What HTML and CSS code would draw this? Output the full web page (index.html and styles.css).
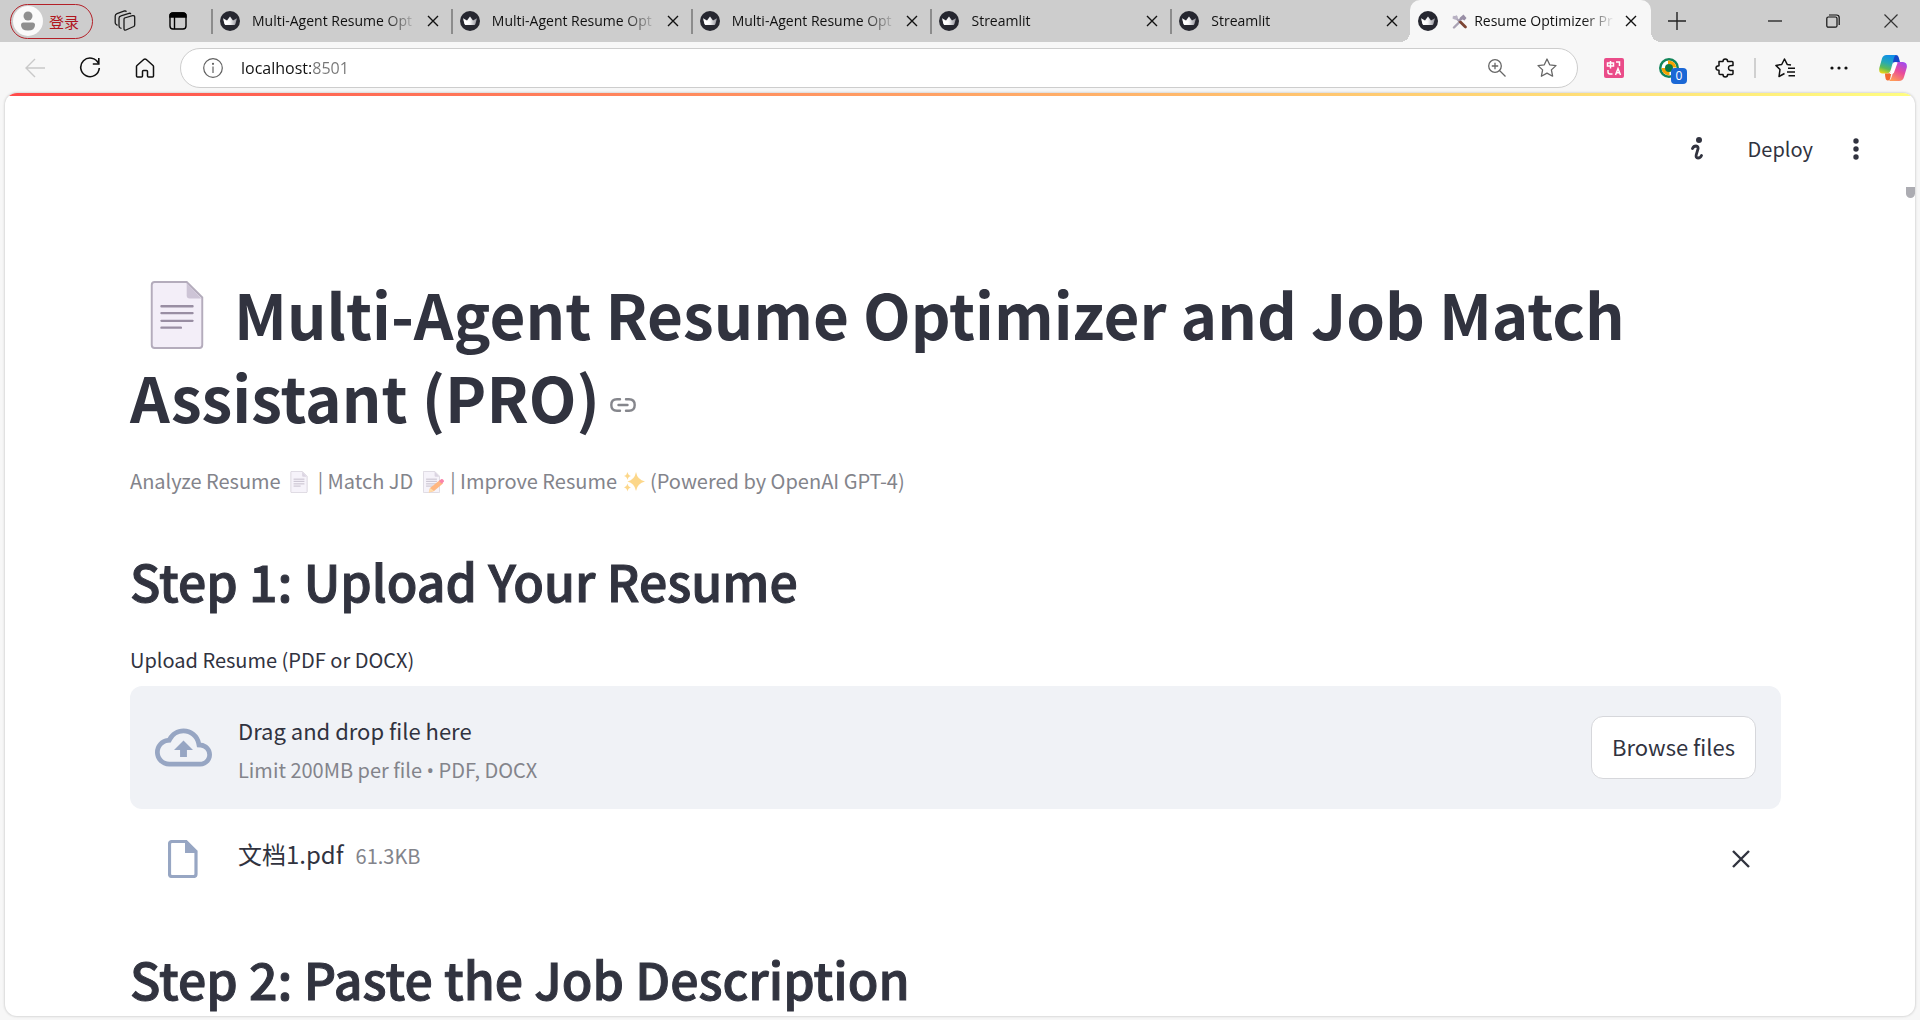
FILE: index.html
```html
<!DOCTYPE html>
<html lang="en">
<head>
<meta charset="utf-8">
<title>Resume Optimizer Pro</title>
<link rel="stylesheet" href="styles.css">
</head>
<body>
<svg class="defs" aria-hidden="true">
  <defs>
    <linearGradient id="crownShade" x1="0" x2="1"><stop offset="0" stop-color="#fff"/><stop offset=".5" stop-color="#f4f4f6"/><stop offset="1" stop-color="#8e8e96"/></linearGradient>
    <symbol id="crown" viewBox="0 0 20 20"><circle cx="10" cy="10" r="10" fill="#262730"/><path d="M3 7.200l4 2.300 3-4 3 4 4-2.300-1.600 5.800q-.3 1-1.200 1H5.800q-.9 0-1.200-1z" fill="url(#crownShade)"/><path d="M3.600 9.500L10 11l-4 3q-1 0-1.300-1z" fill="#fff"/></symbol>
    <symbol id="cross" viewBox="0 0 12 12"><path d="M1 1l10 10M11 1L1 11" fill="none" stroke="currentColor" stroke-width="1.400"/></symbol>
    <symbol id="page" viewBox="0 0 54 70"><path d="M4 1h33l16 16v49q0 3-3 3H4q-3 0-3-3V4q0-3 3-3z" fill="#f3eef8" stroke="#b4acbc" stroke-width="2"/><path d="M37 2l15 16H40q-3 0-3-3z" fill="#cdc4d6"/><path d="M11 26h32M11 33h32M11 41h32M11 48h20" stroke="#998ea3" stroke-width="2.400" stroke-linecap="round"/></symbol>
  </defs>
</svg>

<header class="browser">
  <div class="strip">
    <div class="strip-start">
      <button class="profile" type="button">
        <svg class="avatar" viewBox="0 0 30 30"><circle cx="15" cy="15" r="15" fill="#fafafa"/><circle cx="15" cy="10" r="4.500" fill="#8f8f8f"/><path d="M8 19q0-2.500 2.500-2.500h9q2.500 0 2.500 2.500 0 5.500-7 5.500T8 19z" fill="#8f8f8f"/></svg>
        <span>登录</span>
      </button>
      <button class="strip-btn" type="button" aria-label="Workspaces"><svg width="22" height="22" viewBox="0 0 22 22" fill="none" stroke="#1a1a1a" stroke-width="1.300"><path d="M10.500 8l8-2.300q2.200-.4 2.200 1.600v7.400q0 1.300-1 1.800l-7.700 3.500q-2 .6-2-1.400v-8.800q0-1.400.5-1.800z"/><path d="M7.500 18.500l-1.500-.8q-1-.6-1-1.900V8.300q0-2 2-2.500l8-2.500q1.500-.3 1.800.8M3.500 15.500L2 14.300q-.8-.7-.8-1.800V6q0-1.700 1.800-2.400L10.500 1q1.500-.3 1.800.8"/></svg></button>
      <button class="strip-btn" type="button" aria-label="Tab actions"><svg width="18" height="18" viewBox="0 0 18 18" fill="none" stroke="#000" stroke-width="1.400"><rect x="1" y="1" width="16" height="16" rx="3"/><path d="M1 5V4q0-3 3-3h10q3 0 3 3v1z" fill="#000"/><path d="M5.500 5v12"/></svg></button>
    </div>
    <nav class="tabs">
      <div class="tab"><svg class="favicon"><use href="#crown"/></svg><span class="tab-title">Multi-Agent Resume Opt</span><button class="tab-close" type="button" aria-label="Close tab"><svg><use href="#cross"/></svg></button></div>
      <div class="tab"><svg class="favicon"><use href="#crown"/></svg><span class="tab-title">Multi-Agent Resume Opt</span><button class="tab-close" type="button" aria-label="Close tab"><svg><use href="#cross"/></svg></button></div>
      <div class="tab"><svg class="favicon"><use href="#crown"/></svg><span class="tab-title">Multi-Agent Resume Opt</span><button class="tab-close" type="button" aria-label="Close tab"><svg><use href="#cross"/></svg></button></div>
      <div class="tab"><svg class="favicon"><use href="#crown"/></svg><span class="tab-title">Streamlit</span><button class="tab-close" type="button" aria-label="Close tab"><svg><use href="#cross"/></svg></button></div>
      <div class="tab"><svg class="favicon"><use href="#crown"/></svg><span class="tab-title">Streamlit</span><button class="tab-close" type="button" aria-label="Close tab"><svg><use href="#cross"/></svg></button></div>
      <div class="tab active"><svg class="favicon"><use href="#crown"/></svg><span class="tab-title"><svg class="tools" viewBox="0 0 15 15"><path d="M3 3l9.500 9.500" stroke="#aaa3b5" stroke-width="2.200" stroke-linecap="round"/><path d="M1 1.500l2 2 1-2.500q2.500 1 1.500 4Q3 6.500.5 4.500z" fill="#b9b2c4"/><path d="M6.500 9L2 13.500" stroke="#aaa3b5" stroke-width="2.400" stroke-linecap="round"/><path d="M8 7.500l5.500 5.500" stroke="#7d4533" stroke-width="2.600" stroke-linecap="round"/><path d="M8 3.500l3.500-3 3 3.500-2 2.500-2-1-3 2-1-1z" fill="#998fa6"/></svg>Resume Optimizer Pr</span><button class="tab-close" type="button" aria-label="Close tab"><svg><use href="#cross"/></svg></button></div>
    </nav>
    <button class="new-tab" type="button" aria-label="New tab"><svg width="18" height="18" viewBox="0 0 18 18"><path d="M9 0v18M0 9h18" stroke="#222" stroke-width="1.400"/></svg></button>
    <div class="window-controls">
      <button type="button" aria-label="Minimize"><svg width="14" height="14" viewBox="0 0 14 14"><path d="M0 7h14" stroke="#111" stroke-width="1.200"/></svg></button>
      <button type="button" aria-label="Restore"><svg width="14" height="14" viewBox="0 0 14 14" fill="none" stroke="#111" stroke-width="1.200"><rect x=".8" y="3" width="10.200" height="10.200" rx="1.500"/><path d="M3 1h7.500q2.700 0 2.700 2.700V11"/></svg></button>
      <button type="button" aria-label="Close"><svg width="14" height="14" viewBox="0 0 14 14"><path d="M.5.5l13 13M13.500.5l-13 13" stroke="#333" stroke-width="1.200"/></svg></button>
    </div>
  </div>

  <div class="toolbar">
    <div class="nav-buttons">
      <button type="button" aria-label="Back" disabled><svg width="20" height="20" viewBox="0 0 20 20" fill="none" stroke="#c9c9c9" stroke-width="1.400"><path d="M20 10H1M10 1L1 10l9 9"/></svg></button>
      <button type="button" aria-label="Refresh"><svg width="22" height="22" viewBox="0 0 22 22" fill="none" stroke="#111" stroke-width="1.600"><path d="M19.500 6.500A9.300 9.300 0 1 0 20.300 11"/><path d="M19.800 1v6h-6"/></svg></button>
      <button type="button" aria-label="Home"><svg width="20" height="20" viewBox="0 0 20 20" fill="none" stroke="#111" stroke-width="1.500" stroke-linejoin="round"><path d="M1.500 8.500Q1.500 8 2 7.500l7-6.200q1-.8 2 0l7 6.200q.5.500.5 1V18q0 1-1 1h-4q-1 0-1-1v-4.500q0-1-1-1h-3q-1 0-1 1V18q0 1-1 1h-4q-1 0-1-1z"/></svg></button>
    </div>
    <div class="address">
      <svg width="20" height="20" viewBox="0 0 20 20" fill="none" stroke="#616161" stroke-width="1.200"><circle cx="10" cy="10" r="9.300"/><path d="M10 8.500V15" /><circle cx="10" cy="5.800" r=".5" fill="#616161"/></svg>
      <input class="url" type="text" aria-label="Address" value="localhost:8501">
      <button type="button" aria-label="Zoom"><svg width="18" height="18" viewBox="0 0 18 18" fill="none" stroke="#666" stroke-width="1.300"><circle cx="7" cy="7" r="6.300"/><path d="M11.500 11.500l6 6M7 3.800v6.400M3.800 7h6.400"/></svg></button>
      <button type="button" aria-label="Favorite"><svg width="20" height="20" viewBox="0 0 20 20" fill="none" stroke="#666" stroke-width="1.300" stroke-linejoin="round"><path d="M10 1l2.700 5.800 6.300.8-4.600 4.300 1.200 6.300-5.600-3.100-5.600 3.100 1.200-6.300L1 7.600l6.300-.8z"/></svg></button>
    </div>
    <div class="extensions">
      <button type="button" class="ext" aria-label="Translate"><svg width="20" height="20" viewBox="0 0 20 20" fill="none" stroke="#fff" stroke-width="1.500"><rect width="20" height="20" rx="2" fill="#ea4c89" stroke="none"/><path d="M3.500 5h6v3h-6zM6.500 3v7.500M12 4h3.500v4M4 12v2q0 2 2 2h2.500M11.500 17l2.500-6.500 2.500 6.500M12.500 14.800h3"/></svg></button>
      <button type="button" class="ext download" aria-label="Downloader"><svg width="28" height="28" viewBox="0 0 28 28"><circle cx="10" cy="10" r="10" fill="#12855a"/><circle cx="10" cy="10" r="7.500" fill="#fff"/><path d="M9 2.500q7 0 8.500 7h-4Q13 6 9 6zM2.500 10q.5 7 8 7.500v-4Q6.500 13 6.500 10z" fill="#f5a200"/><circle cx="10" cy="10" r="4" fill="#0c7a45"/></svg><span class="badge">0</span></button>
      <button type="button" class="ext puzzle" aria-label="Extensions"><svg width="20" height="20" viewBox="0 0 20 20" fill="none" stroke="#111" stroke-width="1.500" stroke-linejoin="round"><path d="M4 3.500h4q0-2.500 2.300-2.500t2.300 2.500H17q1 0 1 1v3q-4.500-.5-4.500 2.500T18 12.500v3q0 1-1 1h-4.400q0 2.500-2.300 2.500T8 16.500H5q-1 0-1-1v-3.200Q1 12.300 1 10t3-2.300z"/></svg></button>
      <span class="divider"></span>
      <button type="button" class="ext" aria-label="Favorites"><svg width="20" height="20" viewBox="0 0 20 20" fill="none" stroke="#111" stroke-width="1.500" stroke-linejoin="round"><path d="M16 7l-3.800-.6L9.500 1 6.700 6.500.9 7.400 5 11.500l-1 7L9.500 15.500M13 10.300h7M12 14h8M13.500 17.700H20"/></svg></button>
      <button type="button" class="ext" aria-label="Menu"><svg width="18" height="4" viewBox="0 0 18 4"><g fill="#111"><circle cx="2" cy="2" r="1.600"/><circle cx="9" cy="2" r="1.600"/><circle cx="16" cy="2" r="1.600"/></g></svg></button>
      <button type="button" class="ext copilot" aria-label="Copilot"><svg width="28" height="26" viewBox="0 0 28 26"><defs><linearGradient id="cpA" x1=".5" y1="0" x2=".2" y2="1"><stop offset="0" stop-color="#0f8fe8"/><stop offset=".4" stop-color="#26a9b5"/><stop offset=".7" stop-color="#5dbb58"/><stop offset="1" stop-color="#f4d713"/></linearGradient><linearGradient id="cpB" x1=".8" y1="0" x2=".3" y2="1"><stop offset="0" stop-color="#a04bf0"/><stop offset=".5" stop-color="#ea4c99"/><stop offset="1" stop-color="#ff9a57"/></linearGradient></defs><path d="M14 0h3q2 0 2.600 2L21 7h-5q-2 0-2.600 2z" fill="#1748c9"/><path d="M7.500 0H17q-1.500.8-2.200 3.500L12 14q-1.200 4.500-4.500 4.500H3.500Q-.5 18.500.3 13L3 3.500Q4 0 7.500 0z" fill="url(#cpA)"/><path d="M20 7h4q4.500.5 3.800 5.500L25 22q-1 4-5 4H10q2-1 3-5l2.500-9.500Q16.700 7 20 7z" fill="url(#cpB)"/><path d="M6 18.500h3q2.500-.2 4-3.500l-1.500 7Q11 26 8.500 25.500T6 18.500z" fill="#f2682f"/><path d="M15.500 8h3l-3.500 9.500q-.8 1.500-2.500 1.500h-2z" fill="#fff"/></svg></button>
    </div>
  </div>
</header>

<main class="app">
  <div class="decoration"></div>
  <div class="app-header">
    <button class="info" type="button" aria-label="Status"><svg width="12" height="24" viewBox="0 0 12 24"><circle cx="8" cy="3" r="3" fill="#31333f"/><path d="M1.500 11.500Q2.500 9 5 9q2.500.2 2 3L5.300 17.500Q4.500 21 7 21q2.500 0 3.500-2.500" fill="none" stroke="#31333f" stroke-width="2.800" stroke-linecap="round"/></svg></button>
    <button class="deploy" type="button">Deploy</button>
    <button class="menu" type="button" aria-label="Main menu"><svg width="6" height="22" viewBox="0 0 6 22" fill="#31333f"><circle cx="3" cy="3" r="2.700"/><circle cx="3" cy="11" r="2.700"/><circle cx="3" cy="19" r="2.700"/></svg></button>
  </div>
  <span class="scroll-thumb"></span>

  <div class="content">
    <h1><svg class="title-icon" role="img" aria-label="Page"><use href="#page"/></svg> Multi-Agent Resume Optimizer and Job Match Assistant (PRO)<a class="anchor" href="#" aria-label="Link to heading"><svg width="26" height="14" viewBox="0 0 26 14" fill="none" stroke="#85868c" stroke-width="2.400" stroke-linecap="round"><path d="M10 1.300H7Q1.300 1.300 1.300 7T7 12.700h3M16 1.300h3q5.700 0 5.700 5.700T19 12.700h-3M8.500 7h9"/></svg></a></h1>
    <p class="caption">Analyze Resume <svg class="emoji"><use href="#page"/></svg> | Match JD <svg class="emoji" viewBox="0 0 28 22"><use href="#page" x="5" width="17" height="22"/><path d="M12 17L22 9l3 3.500-9 7.500-5 1.500z" fill="#ff9a4d"/><path d="M12 17l-1.500 4.500L16 20z" fill="#ffd08a"/><path d="M21 10l2-1.800q1.500-.6 2.500.8t0 2l-1.700 1.700z" fill="#f84f86"/></svg> | Improve Resume <svg class="emoji sparkles" viewBox="3 0 24 22" fill="#fcc75a"><path d="M17 1q1.500 8 9 9.500-7.500 1.500-9 9.500-1.500-8-8.500-9.500Q15.500 9 17 1zM8.500 1q.6 3.300 3.500 4-2.900.7-3.500 4-.6-3.300-3.500-4 2.900-.7 3.500-4zM8.500 12.500q.6 3.300 3.500 4-2.900.7-3.500 4-.6-3.300-3.500-4 2.900-.7 3.500-4z"/></svg> (Powered by OpenAI GPT-4)</p>

    <h2>Step 1: Upload Your Resume</h2>
    <label class="field-label" for="browse">Upload Resume (PDF or DOCX)</label>
    <section class="dropzone">
      <svg class="cloud" viewBox="0 0 24 24" fill="#97a6c3"><path d="M19.350 10.040A7.490 7.490 0 0 0 12 4C9.110 4 6.600 5.640 5.350 8.040A5.994 5.994 0 0 0 0 14c0 3.310 2.690 6 6 6h13c2.760 0 5-2.240 5-5 0-2.640-2.050-4.780-4.650-4.960zM19 18H6c-2.210 0-4-1.790-4-4 0-2.050 1.530-3.760 3.560-3.970l1.070-.11.5-.95A5.469 5.469 0 0 1 12 6c2.620 0 4.880 1.860 5.390 4.430l.3 1.500 1.530.11A2.980 2.980 0 0 1 22 15c0 1.650-1.350 3-3 3zM8 13h2.550v3h2.900v-3H16l-4-4z"/></svg>
      <div class="drop-text">
        <span class="drop-title">Drag and drop file here</span>
        <span class="drop-limit">Limit 200MB per file <span class="bullet">•</span> PDF, DOCX</span>
      </div>
      <button class="browse" id="browse" type="button">Browse files</button>
    </section>
    <div class="file">
      <svg class="file-icon" viewBox="0 0 30 38"><path d="M3 1.500h15L28 11.500V34q0 2.500-2.500 2.500H4Q1.500 36.500 1.500 34V4Q1.500 1.500 4 1.500z" fill="none" stroke="#97a6c3" stroke-width="3.200"/><path d="M17 1.500V13h11.500z" fill="#97a6c3"/></svg>
      <div class="file-info">
        <span class="file-name">文档1.pdf</span>
        <span class="file-size">61.3KB</span>
      </div>
      <button class="file-remove" type="button" aria-label="Remove file"><svg width="18" height="18" viewBox="0 0 18 18"><path d="M1 1l16 16M17 1L1 17" stroke="#31333f" stroke-width="2.400"/></svg></button>
    </div>

    <h2 class="next-step">Step 2: Paste the Job Description</h2>
  </div>
</main>
</body>
</html>
```
FILE: styles.css
```css
* { box-sizing: border-box; }
html, body { height: 100%; }
body {
  margin: 0;
  display: flex;
  flex-direction: column;
  overflow: hidden;
  background: #f7f7f7;
  color: #31333f;
  font-family: "Noto Sans CJK SC", "Source Sans Pro", sans-serif;
}
button {
  margin: 0;
  padding: 0;
  border: 0;
  background: none;
  color: inherit;
  font: inherit;
}
svg { display: block; flex: none; }
.defs { position: absolute; width: 0; height: 0; }

/* Browser chrome */
.browser {
  flex: none;
  color: #111;
  font-family: "Open Sans", "Noto Sans CJK SC", sans-serif;
}
.strip {
  display: flex;
  align-items: center;
  height: 42px;
  background: #cdcdcd;
}
.strip-start {
  display: flex;
  align-items: center;
  flex: none;
  width: 211px;
  padding-left: 10px;
}
.profile {
  display: flex;
  align-items: center;
  gap: 6px;
  width: 83px;
  height: 35px;
  padding-left: 2px;
  border: 1px solid #b32028;
  border-radius: 18px;
  color: #b0151d;
  font-size: 15px;
}
.avatar { width: 30px; height: 30px; }
.strip-btn { display: flex; justify-content: center; width: 22px; margin-left: 21px; }
.strip-btn + .strip-btn { margin-left: 31px; }
.tabs { display: flex; flex: 0 1 1440px; min-width: 0; }
.tab {
  display: flex;
  align-items: center;
  flex: 1 1 0;
  min-width: 0;
  height: 42px;
  padding: 0 8px 0 9px;
  background: linear-gradient(#8c8c8c, #8c8c8c) 0 9px / 2px 25px no-repeat;
}
.favicon { width: 20px; height: 20px; margin-right: 12px; }
.tab-title {
  display: flex;
  align-items: center;
  flex: 1;
  overflow: hidden;
  white-space: nowrap;
  font-size: 14px;
  line-height: 22px;
  mask-image: linear-gradient(90deg, #000 calc(100% - 32px), transparent);
}
.tools { width: 15px; height: 15px; margin: 0 7px 0 2px; }
.tab-close { display: flex; justify-content: center; width: 20px; margin-left: 6px; }
.tab-close svg { width: 12px; height: 12px; }
.active {
  position: relative;
  padding: 0 10px 0 8px;
  border-radius: 10px 10px 0 0;
  background: #f7f7f7;
}
.active::before, .active::after {
  content: "";
  position: absolute;
  bottom: 0;
  width: 10px;
  height: 10px;
}
.active::before { right: 100%; background: radial-gradient(circle at 0 0, #cdcdcd 10px, #f7f7f7 10px); }
.active::after { left: 100%; background: radial-gradient(circle at 100% 0, #cdcdcd 10px, #f7f7f7 10px); }
.new-tab { margin-left: 17px; }
.window-controls { display: flex; margin-left: auto; }
.window-controls button { display: flex; justify-content: center; width: 58px; }

.toolbar { display: flex; align-items: center; height: 51px; }
.nav-buttons { display: flex; flex: none; width: 180px; padding-left: 7px; }
.nav-buttons button { display: flex; align-items: center; justify-content: center; width: 55px; }
.address {
  display: flex;
  align-items: center;
  flex: 1;
  height: 40px;
  padding: 0 20px 0 22px;
  border: 1px solid #cdcdcd;
  border-radius: 20px;
  background: #fff;
}
.url {
  flex: 1;
  min-width: 0;
  margin: 0 32px 0 18px;
  padding: 0;
  border: 0;
  outline: 0;
  font: 16px/24px "Open Sans", sans-serif;
  color: transparent;
  background: linear-gradient(90deg, #111 70px, #767676 70px);
  background-clip: text;
}
.address button + button { margin-left: 31px; }
.extensions { display: flex; align-items: center; flex: none; padding: 0 13px 0 26px; }
.ext { position: relative; display: flex; flex: none; }
.ext + .ext { margin-left: 35px; }
.badge {
  position: absolute;
  left: 12px;
  top: 14px;
  width: 16px;
  height: 16px;
  border-radius: 4px;
  background: #1b68d6;
  color: #fff;
  font-size: 12px;
  line-height: 16px;
  text-align: center;
}
.download svg { margin: 4px 0 -4px; }
.ext + .puzzle { margin-left: 28px; }
.ext + .copilot { margin-left: 31px; }
.divider { width: 2px; height: 20px; margin: 0 19px; background: #d0d0d0; }

/* Application page */
.app {
  position: relative;
  flex: 1;
  min-height: 0;
  margin: 0 5px 4px;
  overflow: hidden;
  border-radius: 12px;
  background: #fff;
  box-shadow: 0 0 2px 1px #d9d9d9;
}
.decoration { height: 3px; background: linear-gradient(90deg, #ff4b4b, #fffd80); }
.app-header {
  display: flex;
  align-items: center;
  justify-content: flex-end;
  height: 106px;
  padding-right: 56px;
}
.deploy { margin: 0 40px 0 45px; font-size: 20px; line-height: 30px; }
.scroll-thumb {
  position: absolute;
  top: 94px;
  right: 0;
  width: 9px;
  height: 11px;
  border-radius: 0 0 5px 5px;
  background: #acacb2;
}
.content { padding: 70px 134px 0 125px; }
h1 {
  margin: 0;
  font-size: 62px;
  font-weight: 700;
  line-height: 83px;
}
.title-icon {
  display: inline-block;
  width: 54px;
  height: 68px;
  margin: 0 16px 0 20px;
  vertical-align: -9px;
}
.anchor { display: inline-block; margin-left: 10px; vertical-align: 11px; line-height: 14px; }
.caption {
  margin: 26px 0 0;
  color: #83848b;
  font-size: 20px;
  line-height: 34px;
}
.emoji {
  display: inline-block;
  width: 28px;
  height: 22px;
  vertical-align: -4px;
  opacity: .7;
}
.sparkles { width: 24px; }
/* A semi-bold weight: the medium face with a thin outline */
h2 {
  margin: 48px 0 0;
  font-size: 50px;
  font-weight: 500;
  line-height: 68px;
  -webkit-text-stroke: 1px #31333f;
}
.field-label { display: block; margin-top: 30px; font-size: 20px; line-height: 32px; }
.dropzone {
  display: flex;
  align-items: center;
  min-height: 123px;
  margin-top: 10px;
  padding: 0 25px;
  border-radius: 12px;
  background: #f0f2f6;
}
.cloud { width: 57px; height: 57px; }
.drop-text { display: flex; flex-direction: column; flex: 1; margin-left: 26px; padding-top: 6px; }
.drop-title { font-size: 22px; line-height: 40px; }
.drop-limit { color: #83848b; font-size: 20px; line-height: 40px; }
.bullet { font-family: "Open Sans", sans-serif; }
.browse {
  width: 165px;
  height: 63px;
  padding-bottom: 4px;
  border: 1px solid #d6d7db;
  border-radius: 12px;
  background: #fff;
  font-size: 22px;
}
.file { display: flex; align-items: center; height: 62px; margin-top: 19px; padding: 0 31px 0 38px; }
.file-icon { width: 30px; height: 38px; }
.file-info { display: flex; align-items: baseline; gap: 12px; flex: 1; margin-left: 40px; padding-bottom: 8px; }
.file-name { font-size: 24px; line-height: 32px; }
.file-size { color: #83848b; font-size: 20px; line-height: 32px; }
.next-step { margin-top: 54px; }
```
